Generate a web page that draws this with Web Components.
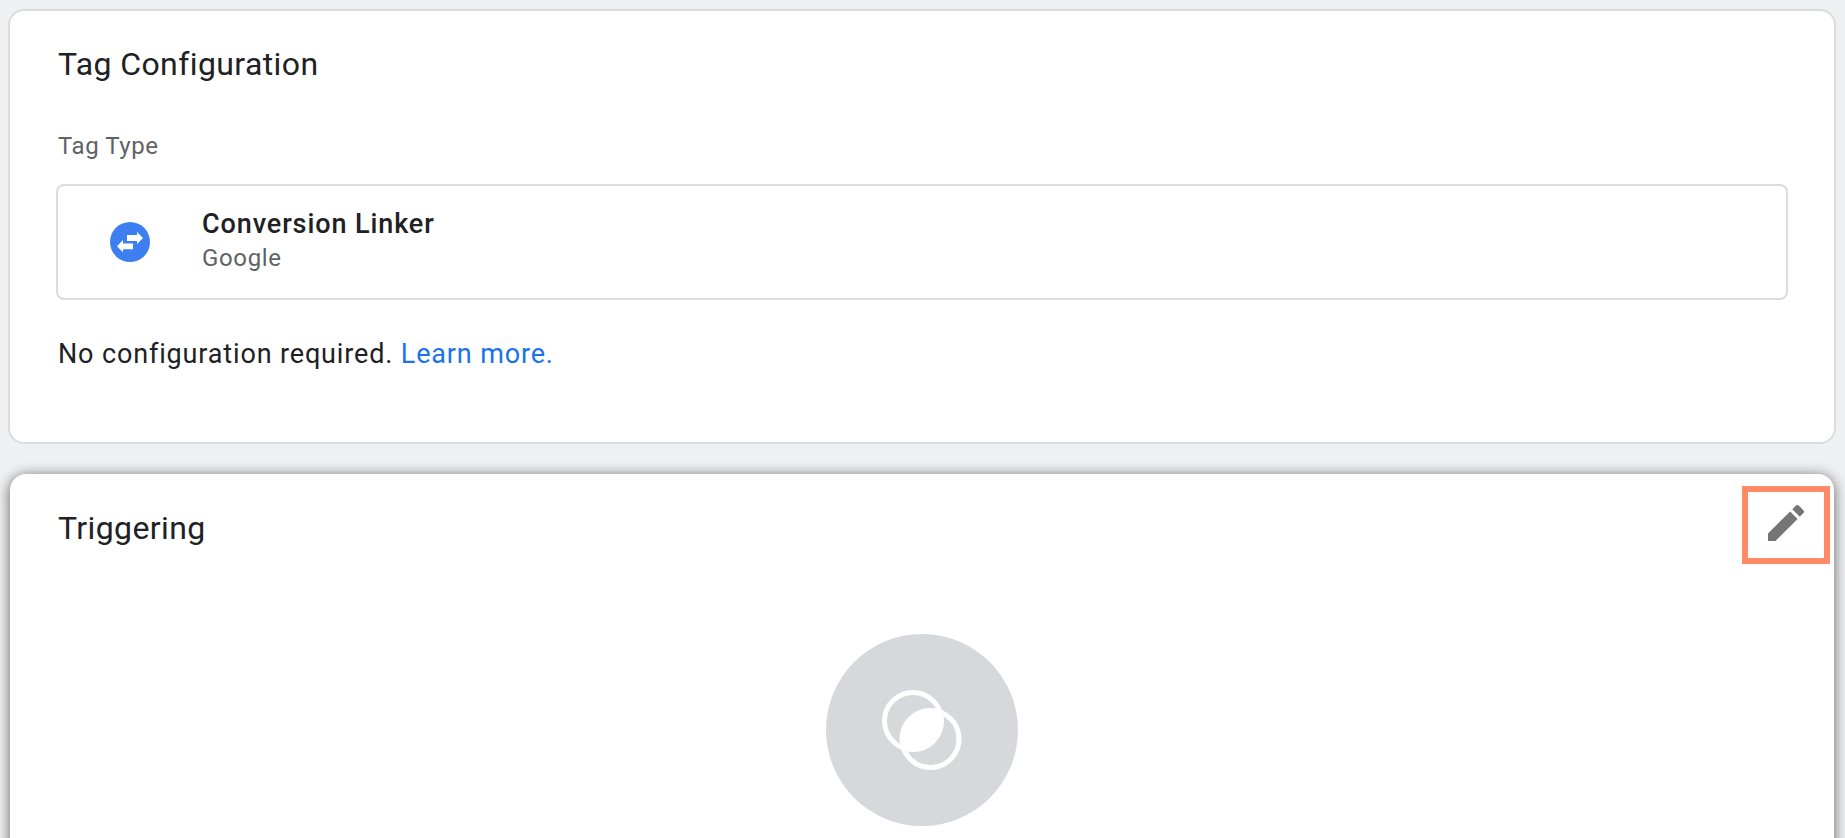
<!DOCTYPE html>
<html>
<head>
<meta charset="utf-8">
<title>Tag Configuration</title>
<style>
  html, body { margin: 0; height: 100%; }
  body {
    background: #eff0f2;
    color: #202124;
    font-family: Roboto, "Liberation Sans", sans-serif;
    overflow: hidden;
  }
  a { color: #1a73e8; text-decoration: none; }
</style>
</head>
<body>
<tag-editor>
  <gtm-card heading="Tag Configuration">
    <tag-type name="Conversion Linker" vendor="Google"></tag-type>
    <p slot="note">No configuration required. <a href="#">Learn more.</a></p>
  </gtm-card>
  <gtm-card heading="Triggering" raised>
    <edit-button slot="action"></edit-button>
    <trigger-empty></trigger-empty>
  </gtm-card>
</tag-editor>

<script>
class TagEditor extends HTMLElement {
  connectedCallback() {
    this.attachShadow({ mode: 'open' });
    this.shadowRoot.innerHTML = `
      <style>
        :host {
          display: flex;
          flex-direction: column;
          gap: 30px;
          padding: 9px 9px 0 8px;
        }
      </style>
      <slot></slot>
    `;
  }
}

class GtmCard extends HTMLElement {
  connectedCallback() {
    const typeLabel = this.hasAttribute('raised') ? '' : '<div class="label">Tag Type</div>';
    this.attachShadow({ mode: 'open' });
    this.shadowRoot.innerHTML = `
      <style>
        :host {
          display: block;
          position: relative;
          box-sizing: border-box;
          background: #fff;
          border: 2px solid #dadce0;
          border-radius: 16px;
          height: 435px;
          padding: 31px 46px 0 48px;
        }
        :host([raised]) {
          border: 0;
          margin: 0 2px;
          height: 460px;
          padding: 32px 48px 0 48px;
          box-shadow: 0 2px 14px rgba(0, 0, 0, 0.6);
        }
        h2 {
          margin: 0;
          font-size: 32px;
          line-height: 44px;
          font-weight: 400;
          letter-spacing: 0.4px;
          color: #202124;
        }
        .label {
          margin: 46px 0 0;
          font-size: 24px;
          line-height: 28px;
          letter-spacing: 0.55px;
          color: #5f6368;
        }
        ::slotted(p) {
          margin: 36px 0 0;
          font-size: 27px;
          line-height: 36px;
          letter-spacing: 0.85px;
          color: #202124;
        }
      </style>
      <h2>${this.getAttribute('heading')}</h2>
      <slot name="action"></slot>
      ${typeLabel}
      <slot></slot>
      <slot name="note"></slot>
    `;
  }
}

class TagType extends HTMLElement {
  connectedCallback() {
    this.attachShadow({ mode: 'open' });
    this.shadowRoot.innerHTML = `
      <style>
        :host {
          display: flex;
          align-items: center;
          box-sizing: border-box;
          height: 116px;
          margin: 24px 0 0 -2px;
          padding-left: 52px;
          border: 2px solid #dadce0;
          border-radius: 8px;
          background: #fff;
        }
        svg { width: 40px; height: 40px; flex: none; }
        .text { margin: -2px 0 0 52px; }
        .name {
          font-size: 27px;
          line-height: 34px;
          font-weight: 500;
          letter-spacing: 0.9px;
          color: #202124;
        }
        .vendor {
          font-size: 24px;
          line-height: 34px;
          letter-spacing: 0.65px;
          color: #5f6368;
        }
      </style>
      <svg viewBox="0 0 40 40">
        <circle cx="20" cy="20" r="20" fill="#3d7ff0"/>
        <path fill="#fff" d="M17 13h10v-3l6 6-6 6v-3H17zM23 21.500H13V18l-6 6.300 6 6v-3h10z"/>
      </svg>
      <div class="text">
        <div class="name">${this.getAttribute('name')}</div>
        <div class="vendor">${this.getAttribute('vendor')}</div>
      </div>
    `;
  }
}

class EditButton extends HTMLElement {
  connectedCallback() {
    this.attachShadow({ mode: 'open' });
    this.shadowRoot.innerHTML = `
      <style>
        :host {
          position: absolute;
          top: 12px;
          right: 4px;
          box-sizing: border-box;
          width: 88px;
          height: 78px;
          padding-bottom: 4px;
          display: flex;
          align-items: center;
          justify-content: center;
          border: 6px solid #ff8a65;
        }
        svg { width: 48px; height: 48px; fill: #757575; }
      </style>
      <svg viewBox="0 0 24 24">
        <path d="M3 17.250V21h3.750L17.810 9.940l-3.750-3.750L3 17.250zM20.710 7.040a1 1 0 0 0 0-1.410l-2.340-2.340a1 1 0 0 0-1.410 0l-1.830 1.830 3.750 3.750 1.830-1.830z"/>
      </svg>
    `;
  }
}

class TriggerEmpty extends HTMLElement {
  connectedCallback() {
    this.attachShadow({ mode: 'open' });
    this.shadowRoot.innerHTML = `
      <style>
        :host {
          display: flex;
          justify-content: center;
          margin-top: 84px;
        }
        svg { width: 192px; height: 192px; display: block; }
      </style>
      <svg viewBox="0 0 192 192">
        <defs>
          <clipPath id="lens"><circle cx="87" cy="87" r="29"/></clipPath>
        </defs>
        <circle cx="96" cy="96" r="96" fill="#d6d8dc"/>
        <circle cx="87" cy="87" r="28.500" fill="none" stroke="#fff" stroke-width="5"/>
        <circle cx="104.500" cy="105" r="28.500" fill="none" stroke="#fff" stroke-width="5"/>
        <circle cx="104.500" cy="105" r="28.500" fill="#fff" clip-path="url(#lens)"/>
      </svg>
    `;
  }
}

customElements.define('tag-editor', TagEditor);
customElements.define('gtm-card', GtmCard);
customElements.define('tag-type', TagType);
customElements.define('edit-button', EditButton);
customElements.define('trigger-empty', TriggerEmpty);
</script>
</body>
</html>
